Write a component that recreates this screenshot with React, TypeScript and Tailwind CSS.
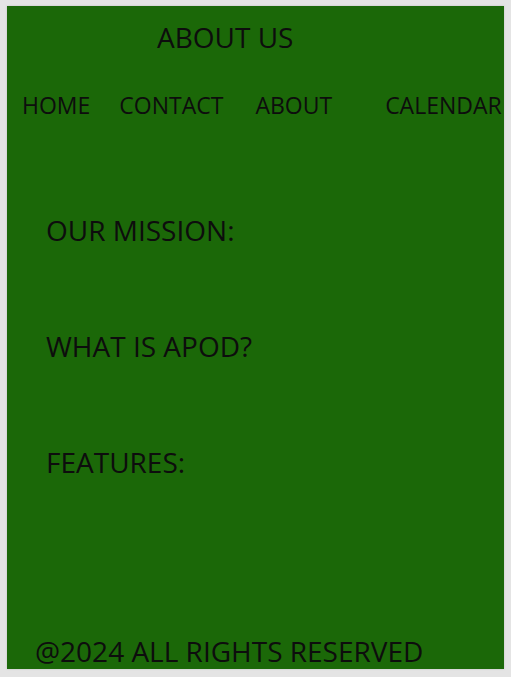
const sections = ["OUR MISSION:", "WHAT IS APOD?", "FEATURES:"];

export default function App() {
  return (
    <div className="min-h-screen bg-[#e4e4e4] pl-[7px] pt-[6px] font-['Open_Sans',sans-serif] text-[#0d0d0d]">
      <div className="flex h-[663px] w-[497px] flex-col overflow-hidden bg-[#1b6808] shadow-[0_0_2px_rgba(0,0,0,0.15)]">
        <h1 className="ml-[150px] mt-[13px] text-[28px] leading-[36px] font-normal">ABOUT US</h1>
        <nav className="mt-[35px] flex whitespace-nowrap text-[23px] leading-[30px]">
          <a className="ml-[15px]">HOME</a>
          <a className="ml-[29px]">CONTACT</a>
          <a className="ml-[32px]">ABOUT</a>
          <a className="ml-[53px]">CALENDAR</a>
        </nav>
        <div className="ml-[39px] mt-[92px] flex flex-col gap-[80px]">
          {sections.map((s) => (
            <h2 key={s} className="text-[28px] leading-[36px] font-normal">
              {s}
            </h2>
          ))}
        </div>
        <footer className="ml-[28px] mt-auto text-[28px] leading-[36px]">@2024 ALL RIGHTS RESERVED</footer>
      </div>
    </div>
  );
}
